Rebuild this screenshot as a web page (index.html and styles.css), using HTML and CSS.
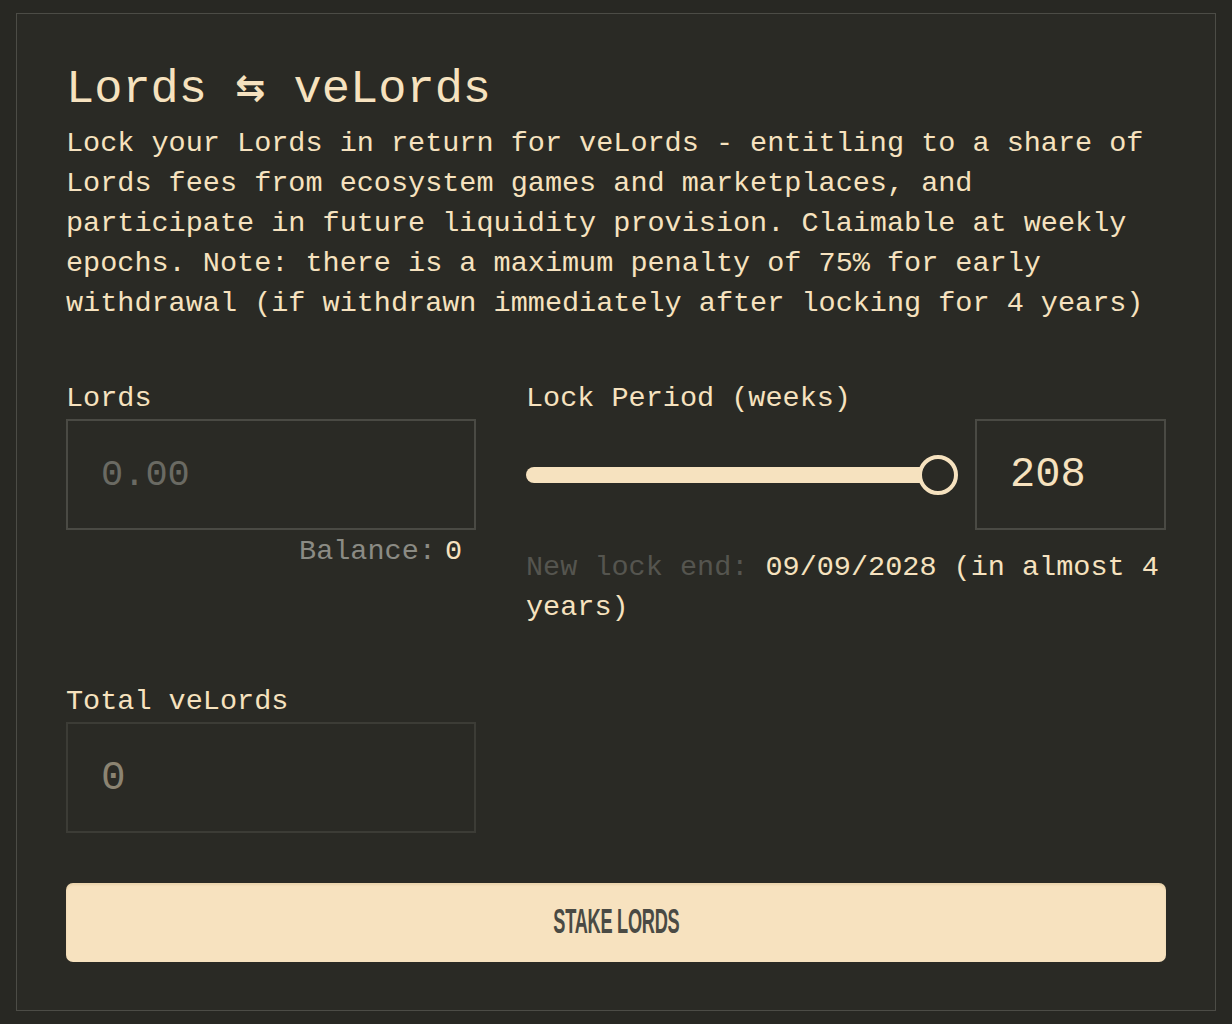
FILE: index.html
```html
<!DOCTYPE html>
<html>
<head>
<meta charset="utf-8">
<link rel="stylesheet" href="styles.css">
</head>
<body>
<div class="card">
  <h1 class="title">Lords <span class="swap">⇆</span> veLords</h1>
  <p class="desc">Lock your Lords in return for veLords - entitling to a share of Lords fees from ecosystem games and marketplaces, and participate in future liquidity provision. Claimable at weekly epochs. Note: there is a maximum penalty of 75% for early withdrawal (if withdrawn immediately after locking for 4 years)</p>

  <div class="grid">
    <div class="field">
      <div class="label">Lords</div>
      <div class="box"><span class="placeholder">0.00</span></div>
      <div class="balance"><span class="muted">Balance:</span><span class="bal-val">0</span></div>
    </div>
    <div class="field">
      <div class="label">Lock Period (weeks)</div>
      <div class="slider-row">
        <div class="slider">
          <div class="track"></div>
          <div class="thumb"></div>
        </div>
        <div class="box num"><span class="value">208</span></div>
      </div>
      <p class="lockend"><span class="dim">New lock end: </span><span>09/09/2028 (in almost 4</span><br><span>years)</span></p>
    </div>
    <div class="field total">
      <div class="label">Total veLords</div>
      <div class="box box-dark"><span class="total-val">0</span></div>
    </div>
  </div>

  <button class="stake"><span class="stake-text">STAKE LORDS</span></button>
</div>
</body>
</html>
```

FILE: styles.css
```css
* { box-sizing: border-box; }
html, body { margin: 0; padding: 0; }
body {
  background: #282823;
  width: 1232px;
  height: 1024px;
  overflow: hidden;
  font-family: "Liberation Mono", "DejaVu Sans Mono", monospace;
  color: #f6e2bf;
  padding: 13px 0 0 16px;
}
.card {
  width: 1200px;
  height: 998px;
  border: 1px solid #4c4c46;
  background: #2a2a25;
  padding: 46px 49px 48px 49px;
  display: flex;
  flex-direction: column;
}
.title {
  margin: 0;
  font-weight: 400;
  font-size: 47px;
  line-height: 56px;
  height: 56px;
}
.swap {
  font-family: "DejaVu Sans", sans-serif;
  font-weight: 700;
  font-size: 36px;
  vertical-align: 2px;
}
.desc {
  margin: 8px 0 0 0;
  font-size: 28.5px;
  line-height: 40px;
  width: 1100px;
}
.grid {
  margin-top: 55px;
  display: grid;
  grid-template-columns: 410px 640px;
  column-gap: 50px;
  row-gap: 54px;
}
.label {
  font-size: 28.5px;
  line-height: 40px;
  margin-bottom: 0;
}
.box {
  height: 111px;
  border: 2px solid #4a4a44;
  display: flex;
  align-items: center;
  padding-left: 33px;
}
.box-dark { border-color: #3c3c36; }
.placeholder {
  color: #6a6a63;
  font-size: 37px;
}
.total-val {
  color: #8c8472;
  font-size: 41px;
}
.balance {
  display: flex;
  justify-content: flex-end;
  padding-right: 14px;
  font-size: 28.5px;
  line-height: 40px;
  margin-top: 2px;
}
.muted { color: #8b8b84; }
.bal-val { margin-left: 9px; }
.slider-row {
  display: flex;
  align-items: center;
  gap: 17px;
}
.slider {
  position: relative;
  flex: 1;
  height: 40px;
  display: flex;
  align-items: center;
}
.track {
  width: 100%;
  height: 16px;
  border-radius: 8px;
  background: #f6e2bf;
  margin-right: 20px;
}
.thumb {
  position: absolute;
  right: 0;
  top: 0;
  width: 40px;
  height: 40px;
  border-radius: 50%;
  border: 4px solid #f6e2bf;
  background: #2a2a25;
}
.num {
  width: 191px;
  flex: none;
}
.value {
  font-size: 42px;
  color: #f6e2bf;
}
.lockend {
  margin: 18px 0 0 0;
  font-size: 28.5px;
  line-height: 40px;
}
.dim { color: #55554f; }
.stake {
  margin-top: auto;
  height: 79px;
  width: 100%;
  border: none;
  border-radius: 7px;
  background: #f7e2bf;
  box-shadow: inset 0 2px 2px rgba(200,170,120,0.25);
  display: flex;
  align-items: center;
  justify-content: center;
  cursor: pointer;
  padding: 0 0 4px 0;
}
.stake-text {
  display: inline-block;
  font-family: "Liberation Sans Narrow", "Liberation Sans", sans-serif;
  font-weight: 700;
  font-size: 35px;
  color: #4a4a44;
  transform: scaleX(0.52);
  letter-spacing: -0.5px;
  white-space: nowrap;
}
```
